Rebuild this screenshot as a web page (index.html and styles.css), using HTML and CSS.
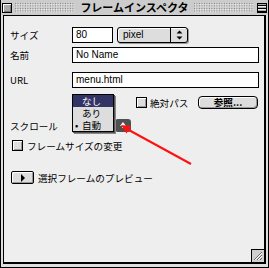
FILE: index.html
```html
<!DOCTYPE html>
<html lang="ja">
<head>
<meta charset="utf-8">
<title>フレームインスペクタ</title>
<link rel="stylesheet" href="styles.css">
</head>
<body>
<div class="window">
  <div class="titlebar">
    <span class="closebox"></span>
    <span class="stripes"></span>
    <span class="title">フレームインスペクタ</span>
    <span class="stripes"></span>
    <span class="collapsebox"></span>
  </div>
  <div class="content">
    <div class="row r-size">
      <span class="label">サイズ</span>
      <span class="field f-size">80</span>
      <span class="popup">
        <span class="p-text">pixel</span>
        <span class="p-arrows">
          <svg width="7" height="10" viewBox="0 0 7 10"><path d="M3.5 0.5 L6.5 3.5 L0.5 3.5 Z M0.5 6.5 L6.5 6.5 L3.5 9.5 Z" fill="#000"/></svg>
        </span>
      </span>
    </div>
    <div class="row r-name">
      <span class="label">名前</span>
      <span class="field f-wide">No Name</span>
    </div>
    <div class="row r-url">
      <span class="label">URL</span>
      <span class="field f-wide">menu.html</span>
    </div>
    <div class="row r-opts">
      <span class="check"></span>
      <span class="ctext">絶対パス</span>
      <span class="button">参照...</span>
    </div>
    <div class="row r-scroll">
      <span class="label">スクロール</span>
      <span class="popup-wrap">
        <span class="menu">
          <span class="item selected">なし</span>
          <span class="item">あり</span>
          <span class="item checked">自動</span>
        </span>
        <span class="scroll-arrow">
          <svg width="16" height="13" viewBox="0 0 16 13"><path d="M8 3 L11 7 L5 7 Z" fill="#fff"/><rect x="7" y="7" width="2" height="2" fill="#fff"/></svg>
        </span>
      </span>
    </div>
    <div class="row r-resize">
      <span class="check"></span>
      <span class="ctext wide">フレームサイズの変更</span>
    </div>
    <div class="row r-preview">
      <span class="disclose">
        <svg width="6" height="8" viewBox="0 0 6 8"><path d="M1 0 L5 4 L1 8 Z" fill="#000"/></svg>
      </span>
      <span class="ctext">選択フレームのプレビュー</span>
    </div>
    <span class="grip">
      <svg width="13" height="13" viewBox="0 0 13 13">
        <rect x="0" y="0" width="13" height="13" fill="#cfcfcf"/>
        <path d="M0 0.5 H13 M0.5 0 V13" stroke="#000" stroke-width="1"/>
        <path d="M3 11 L11 3 M6 11 L11 6 M9 11 L11 9" stroke="#666" stroke-width="1"/>
        <path d="M4 11 L11 4 M7 11 L11 7" stroke="#fff" stroke-width="1"/>
      </svg>
    </span>
  </div>
  <svg class="annot" width="269" height="268" viewBox="0 0 269 268">
    <line x1="191" y1="164" x2="127" y2="129" stroke="#ff1010" stroke-width="2"/>
    <path d="M121 125 L131 126 L126.5 133.5 Z" fill="#ff1010"/>
  </svg>
</div>
</body>
</html>
```

FILE: styles.css
```css
body {
  margin: 0;
  background: #ffffff;
}

.window {
  position: relative;
  width: 269px;
  height: 268px;
  box-sizing: border-box;
  border: 1px solid #000;
  border-top: 0;
  background: #dddddd;
  display: flex;
  flex-direction: column;
  font-family: "Noto Sans CJK JP", sans-serif;
  color: #000;
}

.titlebar {
  height: 15px;
  flex: none;
  display: flex;
  align-items: center;
  background: #cccccc;
}

.closebox {
  width: 10px;
  height: 10px;
  box-sizing: border-box;
  margin-left: 1px;
  border: 1px solid #000;
  background: #aaaaaa;
  box-shadow: inset 1px 1px 0 #ffffff, inset -1px -1px 0 #777777;
}

.stripes {
  flex: 1;
  height: 10px;
  margin: 0 3px;
  background-image:
    conic-gradient(from 270deg at 1px 1px, #7a7a7a 90deg, transparent 0),
    conic-gradient(from 270deg at 1px 1px, #f4f4f4 90deg, transparent 0);
  background-size: 2.5px 2.5px, 2.5px 2.5px;
  background-position: 0 0, 1px 1px;
}

.title {
  font-size: 11px;
  font-weight: bold;
  line-height: 15px;
  padding: 0 2px;
  white-space: nowrap;
}

.collapsebox {
  width: 10px;
  height: 10px;
  box-sizing: border-box;
  margin-right: 1px;
  border: 1px solid #000;
  background:
    repeating-linear-gradient(180deg, #aaaaaa 0 1px, #000 1px 2px, #eeeeee 2px 3px);
}

.content {
  flex: 1;
  display: flex;
  flex-direction: column;
  margin: 0 2px 3px 2px;
  border: 1px solid #000;
  border-right-width: 2px;
  border-bottom-width: 2px;
  background: #eeeeee;
  padding: 11px 0 0 6px;
}

.row {
  display: flex;
  align-items: center;
  font-size: 9.6px;
  white-space: nowrap;
}

.label {
  width: 62px;
  flex: none;
  font-size: 9.6px;
}

.r-size { height: 16px; }
.r-name { height: 16px; margin-top: 4px; }
.r-url { height: 16px; margin-top: 9px; }
.r-opts { height: 13px; margin-top: 8px; margin-left: 126px; }
.r-scroll { height: 13px; margin-top: 10px; }
.r-resize { height: 11px; margin-top: 8px; }
.r-preview { height: 13px; margin-top: 20px; }

.field {
  box-sizing: border-box;
  height: 16px;
  border: 1px solid #000;
  background: #ffffff;
  font-family: "Liberation Sans", sans-serif;
  font-size: 10px;
  line-height: 14px;
  padding-left: 3px;
}

.f-size { width: 41px; }
.f-wide { width: 187px; }

.popup {
  display: flex;
  box-sizing: border-box;
  width: 71px;
  height: 16px;
  margin-left: 4px;
  border: 1px solid #000;
  border-radius: 3px;
  background: #dddddd;
  box-shadow: inset 1px 1px 0 #ffffff, 1px 1px 0 #999999;
}

.p-text {
  flex: 1;
  padding-left: 5px;
  font-family: "Liberation Sans", sans-serif;
  font-size: 10px;
  line-height: 14px;
}

.p-arrows {
  width: 16px;
  border-left: 1px solid #000;
  display: flex;
  align-items: center;
  justify-content: center;
}

.check {
  width: 11px;
  height: 11px;
  flex: none;
  box-sizing: border-box;
  border: 1px solid #000;
  background: #dddddd;
  box-shadow: inset 1px 1px 0 #ffffff, inset -1px -1px 0 #999999;
}

.ctext {
  margin-left: 3px;
}

.r-resize .check { margin-left: 2px; }
.r-resize .ctext { margin-left: 4px; }

.button {
  margin-left: auto;
  margin-right: 6px;
  width: 60px;
  height: 13px;
  box-sizing: border-box;
  border: 1px solid #000;
  border-radius: 4px;
  background: #dddddd;
  box-shadow: inset 1px 1px 0 #ffffff, inset -1px -1px 0 #999999;
  font-weight: bold;
  font-size: 9.6px;
  line-height: 11px;
  text-align: center;
}

.popup-wrap {
  position: relative;
  width: 59px;
  height: 13px;
  display: flex;
}

.menu {
  position: absolute;
  left: 0;
  top: -25px;
  width: 42px;
  box-sizing: border-box;
  border: 1px solid #000;
  background: #dddddd;
  box-shadow: 1px 1px 0 #555555, 2px 2px 0 #888888;
  display: flex;
  flex-direction: column;
  z-index: 2;
}

.item {
  position: relative;
  height: 12px;
  line-height: 12px;
  padding-left: 9px;
  font-size: 9.6px;
}

.item.selected {
  background: #333366;
  color: #ffffff;
}

.item.checked::before {
  content: "•";
  position: absolute;
  left: 2px;
  top: 0;
}

.scroll-arrow {
  margin-left: auto;
  width: 16px;
  height: 13px;
  border-radius: 3px;
  background: #505050;
  display: flex;
}

.disclose {
  width: 23px;
  height: 13px;
  margin-left: 1px;
  box-sizing: border-box;
  border: 1px solid #000;
  border-radius: 2px;
  background: #dddddd;
  box-shadow: inset 1px 1px 0 #ffffff, inset -1px -1px 0 #999999;
  display: flex;
  align-items: center;
  justify-content: center;
}

.r-preview .ctext { margin-left: 4px; }

.grip {
  margin-top: auto;
  align-self: flex-end;
  width: 13px;
  height: 13px;
  display: flex;
}

.annot {
  position: absolute;
  left: -1px;
  top: 0;
  pointer-events: none;
}
```
